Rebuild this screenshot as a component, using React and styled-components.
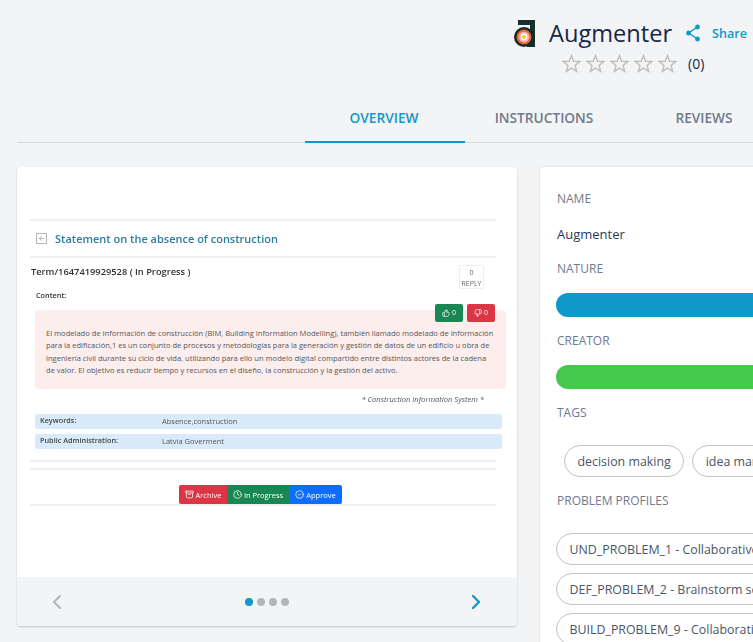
import styled, { createGlobalStyle } from "styled-components";
import { ArrowLeft, ChevronLeft, ChevronRight, ThumbsUp, ThumbsDown, Archive, Clock, CircleCheck } from "lucide-react";

const GlobalStyle = createGlobalStyle`
  html, body {
    margin: 0;
    padding: 0;
    background: #f3f4f6;
    overflow: hidden;
    font-family: "Open Sans", "Liberation Sans", sans-serif;
  }
  * { box-sizing: border-box; }
`;

const Page = styled.div`
  width: 753px;
  height: 642px;
  overflow: hidden;
  display: flex;
  flex-direction: column;
`;

const Header = styled.header`
  height: 100px;
  padding: 15px 0 0 512px;
  flex: none;
`;

const TitleRow = styled.div`
  display: flex;
  align-items: center;
  height: 36px;
  white-space: nowrap;
`;

const Title = styled.h1`
  margin: 0 0 0 11px;
  font-size: 23.6px;
  font-weight: 500;
  color: #17264a;
  line-height: 36px;
`;

const ShareLink = styled.a`
  margin-left: 13px;
  display: flex;
  align-items: center;
  gap: 9px;
  font-size: 12.6px;
  font-weight: 600;
  color: #0f98c9;
`;

const RatingRow = styled.div`
  display: flex;
  align-items: center;
  margin: 0 0 0 50px;
  height: 24px;
  color: #17264a;
  font-size: 14px;
`;

const Stars = styled.div`
  display: flex;
  gap: 5px;
  margin-right: 11px;
`;

const Tabs = styled.nav`
  display: flex;
  height: 43px;
  margin: 0 0 0 17px;
  padding-left: 288px;
  border-bottom: 1px solid #d5d7db;
  flex: none;
`;

const Tab = styled.div`
  width: 160px;
  flex: none;
  height: 43px;
  padding: 8px 2px 0 0;
  text-align: center;
  font-size: 13.7px;
  line-height: 20px;
  font-weight: 600;
  color: ${(p) => (p.$active ? "#0f98c9" : "#6f7a8c")};
  border-bottom: ${(p) => (p.$active ? "2px solid #0f98c9" : "none")};
`;

const Columns = styled.main`
  display: flex;
  gap: 23px;
  padding: 24px 0 0 17px;
  width: 1100px;
`;

const ShotCard = styled.section`
  width: 500px;
  height: 459px;
  flex: none;
  background: #fff;
  border-radius: 4px;
  overflow: hidden;
  box-shadow: 0 1px 2px rgba(0, 0, 0, 0.2);
  display: flex;
  flex-direction: column;
`;

const Shot = styled.div`
  height: 410px;
  flex: none;
  padding: 52px 20px 0 13px;
  filter: blur(0.3px);
`;

const Rule = styled.div`
  height: 2px;
  width: 466px;
  background: #eeeff1;
  margin-top: ${(p) => p.$top || "0"};
`;

const ShotTitle = styled.div`
  display: flex;
  align-items: center;
  height: 35px;
  padding-left: 6px;
  gap: 8px;
  font-size: 11px;
  font-weight: 600;
  color: #2f7d9f;
`;

const BackBox = styled.span`
  width: 11px;
  height: 11px;
  border: 1px solid #b4b7bb;
  display: flex;
  align-items: center;
  justify-content: center;
  color: #888;
`;

const TermRow = styled.div`
  position: relative;
  height: 52px;
  width: 466px;
  padding: 8px 0 0 1px;
  font-size: 9.3px;
  font-weight: 600;
  color: #333;
  line-height: 12px;
`;

const ContentLabel = styled.div`
  margin: 11px 0 0 5px;
  font-size: 7.3px;
  font-weight: 600;
  color: #333;
`;

const ReplyBox = styled.div`
  position: absolute;
  right: 12px;
  top: 7px;
  width: 25px;
  height: 24px;
  border: 1px solid #eee;
  border-radius: 2px;
  text-align: center;
  font-size: 7px;
  line-height: 11px;
  padding-top: 1px;
  font-weight: 500;
  color: #666;
`;

const Notice = styled.div`
  position: relative;
  width: 471px;
  height: 79px;
  margin-left: 5px;
  padding: 17px 10px 0 11px;
  background: #fdeeee;
  border-radius: 4px;
  font-size: 7.57px;
  line-height: 12.4px;
  color: #555;
  white-space: nowrap;
`;

const VoteGroup = styled.div`
  position: absolute;
  top: -6px;
  right: 11px;
  display: flex;
  gap: 4px;
`;

const VoteButton = styled.span`
  width: 28px;
  height: 18px;
  border-radius: 2px;
  display: flex;
  align-items: center;
  justify-content: center;
  gap: 2px;
  color: #fff;
  font-size: 7px;
  background: ${(p) => p.$bg};
`;

const Citation = styled.div`
  width: 454px;
  margin-top: 5px;
  height: 15px;
  text-align: right;
  font-size: 7.6px;
  line-height: 10px;
  font-style: italic;
  color: #555;
`;

const InfoRow = styled.div`
  width: 467px;
  height: 15px;
  margin: 5px 0 0 5px;
  padding: 0 0 0 5px;
  display: flex;
  background: #d9ebfb;
  border-radius: 2px;
  font-size: 7.5px;
  line-height: 15px;
  color: #555;
`;

const InfoKey = styled.span`
  width: 122px;
  flex: none;
  font-size: 7.3px;
  font-weight: 600;
  color: #444;
  line-height: 12px;
`;

const ActionGroup = styled.div`
  display: flex;
  width: 163px;
  height: 19px;
  margin: 15px 0 0 149px;
  border-radius: 2px;
  overflow: hidden;
`;

const ActionButton = styled.span`
  display: flex;
  align-items: center;
  justify-content: center;
  gap: 2px;
  width: ${(p) => p.$width};
  background: ${(p) => p.$bg};
  color: #fff;
  font-size: 7.5px;
`;

const Pager = styled.footer`
  flex: 1;
  background: #f3f4f6;
  display: flex;
  align-items: center;
  justify-content: space-between;
  padding: 0 29px 0 28px;
`;

const Dots = styled.div`
  display: flex;
  gap: 4px;
`;

const Dot = styled.span`
  width: 8px;
  height: 8px;
  border-radius: 50%;
  background: ${(p) => (p.$active ? "#0f98c9" : "#b4b5b8")};
`;

const InfoCard = styled.section`
  width: 500px;
  height: 520px;
  flex: none;
  background: #fff;
  border-radius: 4px;
  box-shadow: 0 0 2px rgba(0, 0, 0, 0.18);
  padding: 23px 16px 0;
`;

const Label = styled.div`
  font-size: 12px;
  line-height: 18px;
  font-weight: 500;
  color: #6f7a8f;
  text-transform: uppercase;
  padding-left: 1px;
  margin-bottom: ${(p) => p.$gap};
`;

const Name = styled.div`
  font-size: 13px;
  line-height: 18px;
  font-weight: 500;
  color: #2b3a58;
  padding-left: 1px;
  margin-bottom: 17px;
`;

const Bar = styled.div`
  height: 24px;
  border-radius: 12px;
  background: ${(p) => p.$bg};
  margin-bottom: 15px;
`;

const TagRow = styled.div`
  display: flex;
  gap: 8px;
  padding-left: 8px;
  margin-bottom: 15px;
  white-space: nowrap;
`;

const Chip = styled.span`
  display: inline-flex;
  align-items: center;
  height: 32px;
  padding: 0 12.5px;
  border: 1px solid #c2c3c6;
  border-radius: 16px;
  font-size: 12.4px;
  color: #4a5568;
  white-space: nowrap;
  flex: none;
`;

const ProfileList = styled.div`
  display: flex;
  flex-direction: column;
  align-items: flex-start;
  gap: 8px;
`;

const StarIcon = () => (
  <svg width="19" height="19" viewBox="0 0 20 20" fill="none" stroke="#bdbdbd" strokeWidth="1.5">
    <polygon points="10,1.6 12.3,7.6 18.8,7.9 13.7,12 15.4,18.3 10,14.8 4.6,18.3 6.3,12 1.2,7.9 7.7,7.6" />
  </svg>
);

const ShareIcon = () => (
  <svg width="18" height="18" viewBox="0 0 18 18" fill="#0f98c9" stroke="#0f98c9" strokeWidth="1.5">
    <path d="M12.5 3 3.5 9l9 6" fill="none" />
    <circle cx="12.5" cy="3" r="2.2" strokeWidth="0.5" />
    <circle cx="3.5" cy="9" r="2.2" strokeWidth="0.5" />
    <circle cx="12.5" cy="15" r="2.2" strokeWidth="0.5" />
  </svg>
);

const Logo = () => (
  <svg width="26" height="32" viewBox="0 0 26 32">
    <path d="M6 3h17v27h-8v-3h3V8H6z" fill="#16302f" />
    <circle cx="12" cy="20" r="10" fill="#14282a" />
    <circle cx="12" cy="20" r="7.5" fill="#e8662e" />
    <circle cx="12" cy="20" r="5.4" fill="#f6b3ac" />
    <circle cx="12" cy="20" r="3.4" fill="#fff" />
    <circle cx="12" cy="20" r="2" fill="#f6c928" />
  </svg>
);

export default function App() {
  return (
    <Page>
      <GlobalStyle />
      <Header>
        <TitleRow>
          <Logo />
          <Title>Augmenter</Title>
          <ShareLink>
            <ShareIcon />
            Share
          </ShareLink>
        </TitleRow>
        <RatingRow>
          <Stars>
            <StarIcon />
            <StarIcon />
            <StarIcon />
            <StarIcon />
            <StarIcon />
          </Stars>
          (0)
        </RatingRow>
      </Header>
      <Tabs>
        <Tab $active>OVERVIEW</Tab>
        <Tab>INSTRUCTIONS</Tab>
        <Tab>REVIEWS</Tab>
      </Tabs>
      <Columns>
        <ShotCard>
          <Shot>
            <Rule />
            <ShotTitle>
              <BackBox>
                <ArrowLeft size={7} />
              </BackBox>
              Statement on the absence of construction
            </ShotTitle>
            <Rule />
            <TermRow>
              Term/1647419929528 ( In Progress )
              <ContentLabel>Content:</ContentLabel>
              <ReplyBox>
                0
                <br />
                REPLY
              </ReplyBox>
            </TermRow>
            <Notice>
              <VoteGroup>
                <VoteButton $bg="#198754">
                  <ThumbsUp size={8} />0
                </VoteButton>
                <VoteButton $bg="#dc3545">
                  <ThumbsDown size={8} />0
                </VoteButton>
              </VoteGroup>
              El modelado de información de construcción (BIM, Building Information Modelling), también llamado modelado de información
              <br />
              para la edificación,1 es un conjunto de procesos y metodologías para la generación y gestión de datos de un edificio u obra de
              <br />
              ingeniería civil durante su ciclo de vida, utilizando para ello un modelo digital compartido entre distintos actores de la cadena
              <br />
              de valor. El objetivo es reducir tiempo y recursos en el diseño, la construcción y la gestión del activo.
            </Notice>
            <Citation>* Construction Information System *</Citation>
            <InfoRow>
              <InfoKey>Keywords:</InfoKey>
              Absence,construction
            </InfoRow>
            <InfoRow>
              <InfoKey>Public Administration:</InfoKey>
              Latvia Goverment
            </InfoRow>
            <Rule $top="11px" />
            <Rule $top="6px" />
            <ActionGroup>
              <ActionButton $bg="#dc3545" $width="48px">
                <Archive size={9} />
                Archive
              </ActionButton>
              <ActionButton $bg="#198754" $width="62px">
                <Clock size={9} />
                In Progress
              </ActionButton>
              <ActionButton $bg="#0d6efd" $width="53px">
                <CircleCheck size={9} />
                Approve
              </ActionButton>
            </ActionGroup>
            <Rule />
          </Shot>
          <Pager>
            <ChevronLeft size={24} color="#b4b5b8" />
            <Dots>
              <Dot $active />
              <Dot />
              <Dot />
              <Dot />
            </Dots>
            <ChevronRight size={24} color="#0f98c9" strokeWidth={2.4} />
          </Pager>
        </ShotCard>
        <InfoCard>
          <Label $gap="17px">Name</Label>
          <Name>Augmenter</Name>
          <Label $gap="15px">Nature</Label>
          <Bar $bg="#0f98c9" />
          <Label $gap="15px">Creator</Label>
          <Bar $bg="#45c94b" />
          <Label $gap="23px">Tags</Label>
          <TagRow>
            <Chip>decision making</Chip>
            <Chip>idea management</Chip>
          </TagRow>
          <Label $gap="23px">Problem Profiles</Label>
          <ProfileList>
            <Chip>UND_PROBLEM_1 - Collaborative ideation</Chip>
            <Chip>DEF_PROBLEM_2 - Brainstorm sessions</Chip>
            <Chip>BUILD_PROBLEM_9 - Collaboration tools</Chip>
          </ProfileList>
        </InfoCard>
      </Columns>
    </Page>
  );
}
